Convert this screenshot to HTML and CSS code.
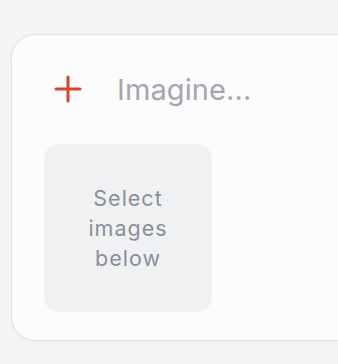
FILE: index.html
```html
<!DOCTYPE html>
<html>
<head>
<meta charset="utf-8">
<link rel="stylesheet" href="styles.css">
</head>
<body>
<div class="card">
  <div class="prompt">
    <svg class="plus" width="30" height="30" viewBox="0 0 30 30"><path d="M15 3V27M3 15H27" stroke="#d8432b" stroke-width="3" stroke-linecap="round"/></svg>
    <span class="placeholder">Imagine...</span>
  </div>
  <div class="slot">Select<br>images<br>below</div>
</div>
</body>
</html>
```
FILE: styles.css
```css
html, body { margin: 0; height: 100%; overflow: hidden; }
body {
  background: #f5f5f6;
  padding: 34px 0 0 11px;
  box-sizing: border-box;
  font-family: Inter, "Noto Sans", sans-serif;
}
.card {
  height: 307px;
  box-sizing: border-box;
  background: #fcfcfc;
  border: 1.5px solid #e2e2e7;
  border-right: none;
  border-radius: 24px 0 0 24px;
  box-shadow: 0 2px 6px rgba(0,0,0,0.03);
  padding: 39px 0 0 32px;
}
.prompt {
  display: flex;
  align-items: center;
  gap: 34px;
  height: 30px;
  margin-left: 9px;
}
.placeholder {
  font-size: 29px;
  color: #a3a6b0;
  letter-spacing: 0.1px;
}
.slot {
  margin-top: 40px;
  width: 168px;
  height: 168px;
  background: #f0f1f3;
  border-radius: 15px;
  display: flex;
  align-items: center;
  justify-content: center;
  text-align: center;
  font-size: 21.5px;
  line-height: 30px;
  color: #8a8e9b;
  letter-spacing: 1px;
}
```
